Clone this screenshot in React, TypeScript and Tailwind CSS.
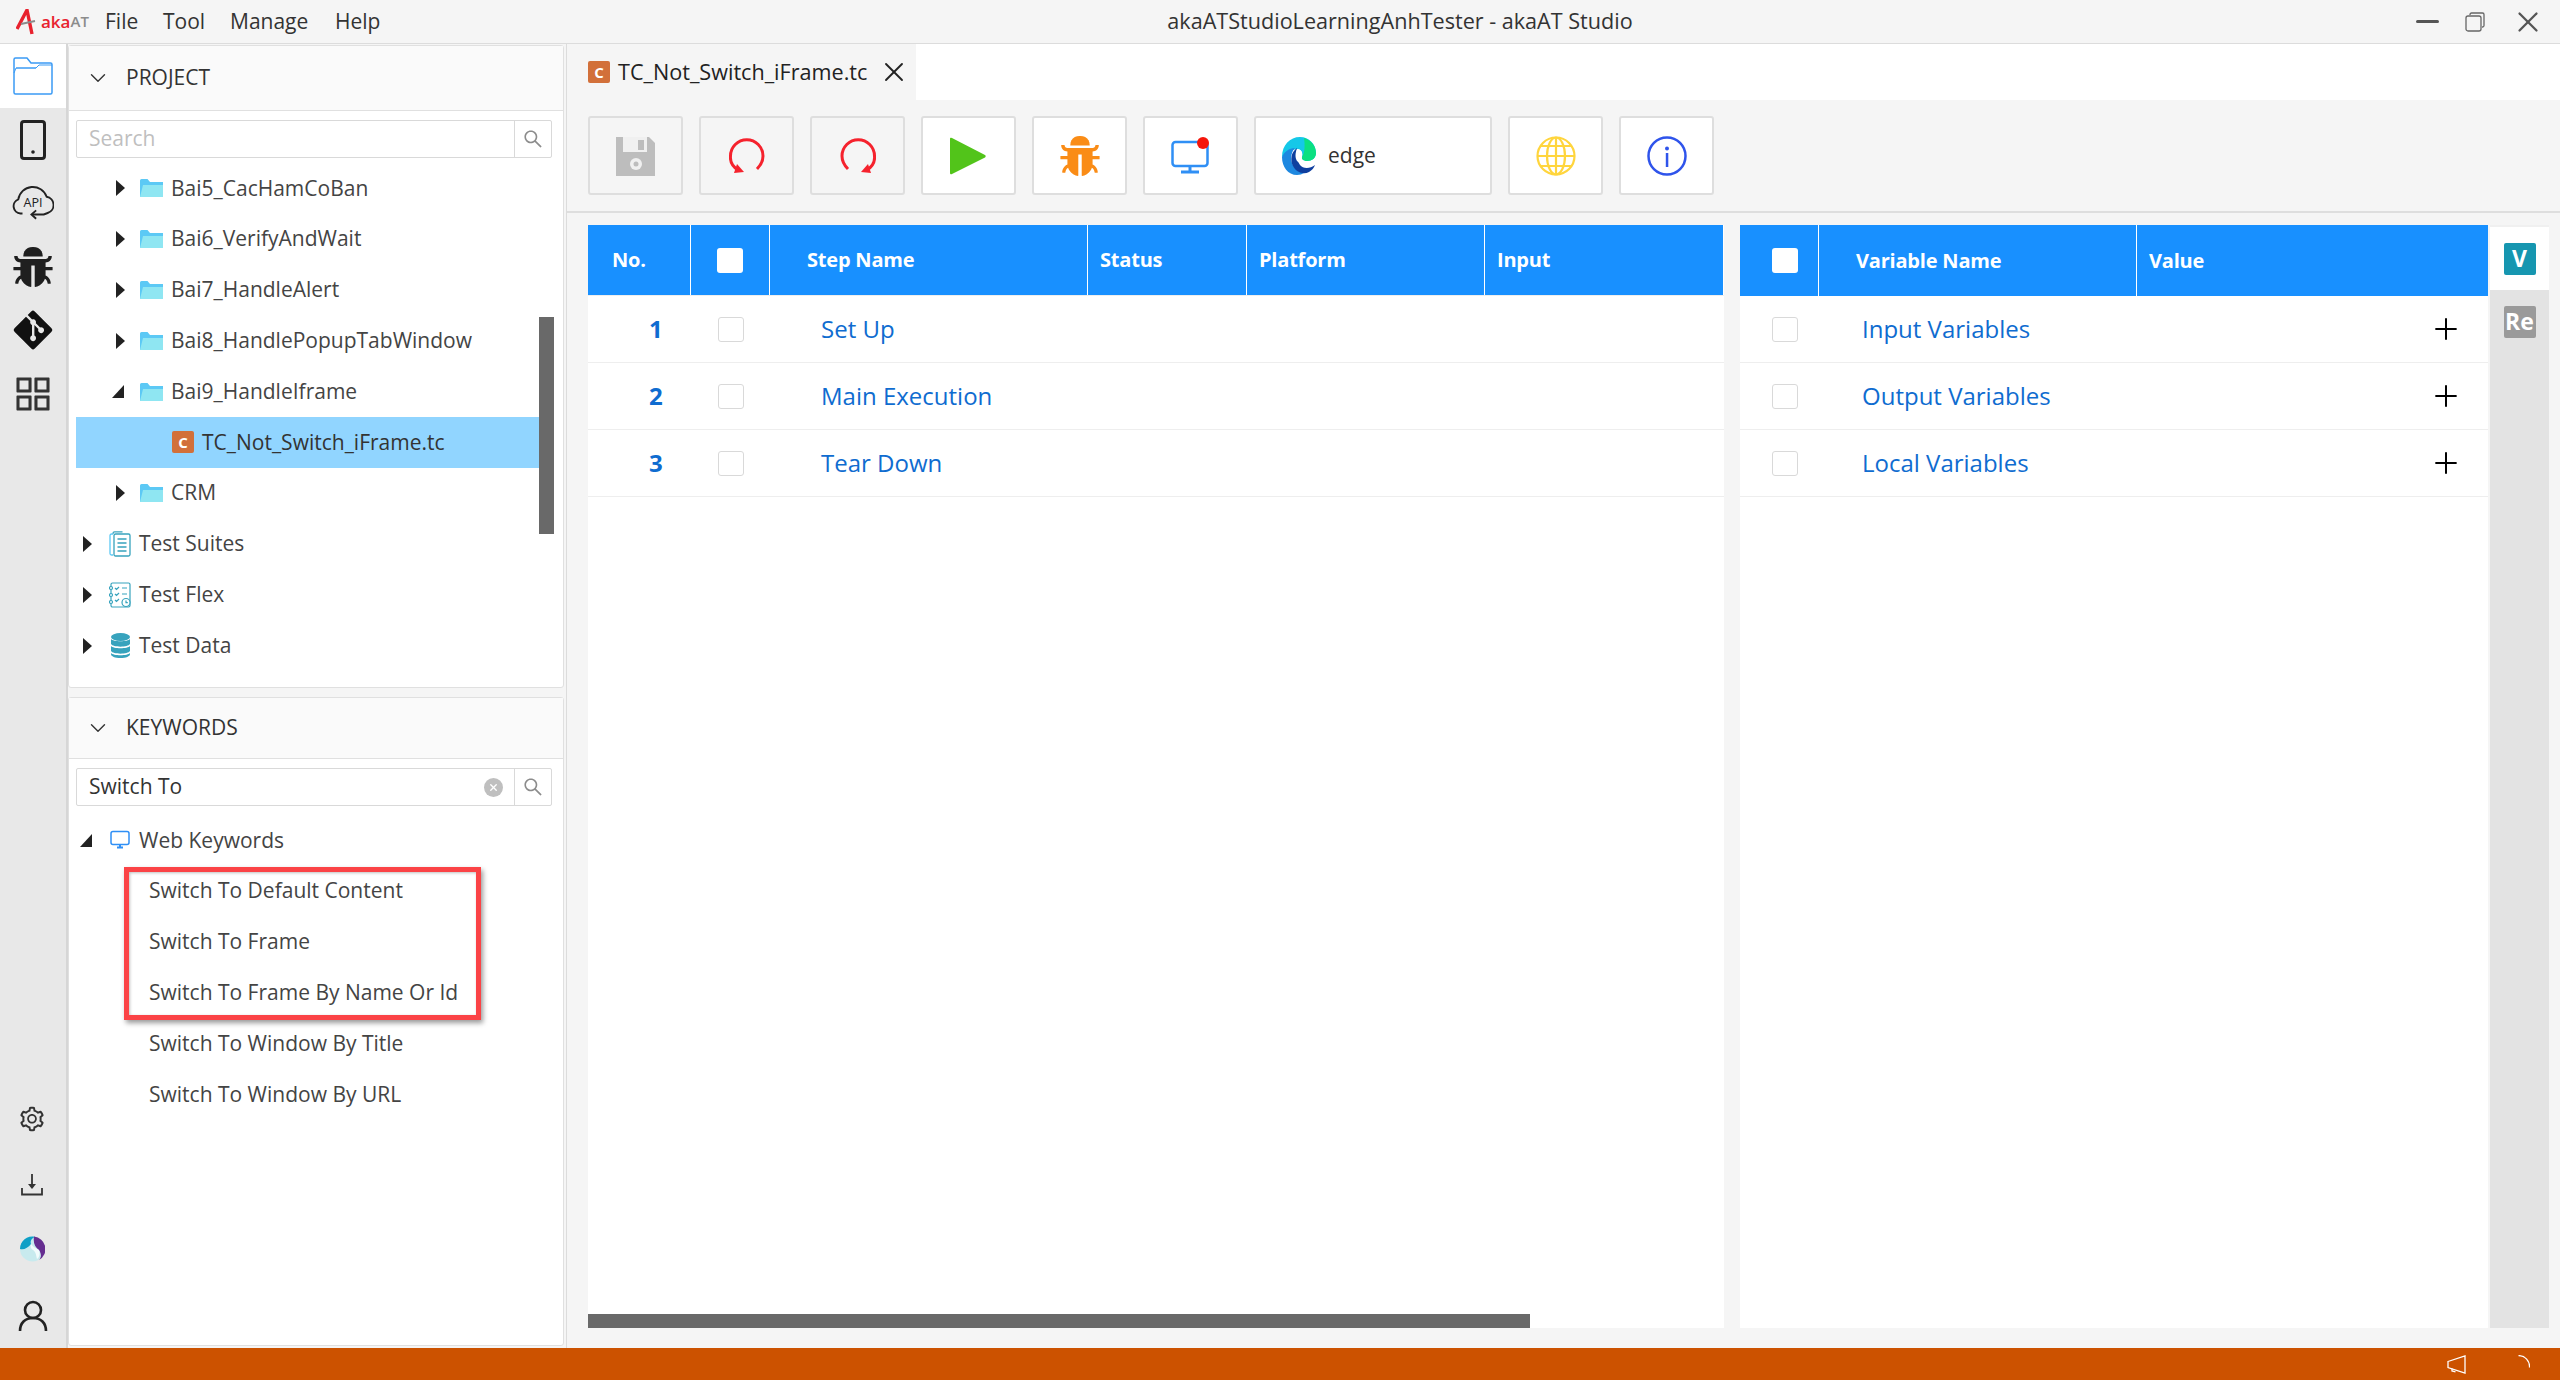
import { AiFillBug, AiOutlineAppstore, AiOutlineSearch, AiOutlineSetting } from "react-icons/ai"
import { FaGitAlt } from "react-icons/fa"
import { ChevronDown, Plus, X } from "lucide-react"

const FolderIcon = () => (
  <svg width="23" height="18" viewBox="0 0 23 18" className="shrink-0">
    <path d="M0 1.500A1.500 1.500 0 0 1 1.500 0h6L10 3h13v15H0z" fill="#5cc9f5" />
    <path d="M0 18L3 6h20v12z" fill="#8fe6f2" />
  </svg>
)

const FileBadge = () => (
  <span className="flex h-[22px] w-[22px] shrink-0 items-center justify-center rounded-[2px] bg-[#d2703a] text-[15px] font-bold text-white">C</span>
)

const Caret = ({ open }: { open?: boolean }) =>
  open ? (
    <svg width="12" height="13" viewBox="0 0 12 13" className="shrink-0"><path d="M12 0v13H0z" fill="#222" /></svg>
  ) : (
    <svg width="9" height="16" viewBox="0 0 9 16" className="shrink-0"><path d="M0 0l9 8-9 8z" fill="#222" /></svg>
  )

const SuitesIcon = () => (
  <svg width="22" height="26" viewBox="0 0 22 26" fill="none" stroke="#37a3bd" strokeWidth="1.300" className="shrink-0">
    <path d="M4 3V2.200A1.500 1.500 0 0 1 5.500.8h8" />
    <path d="M4 3H2.500A1.500 1.500 0 0 0 1 4.500v18A1.500 1.500 0 0 0 2.500 24H4" stroke="#5cc9f5" />
    <rect x="5" y="3" width="16" height="22" rx="1.500" />
    <path d="M8.500 8h9M8.500 12h9M8.500 16h9M8.500 20h9" />
  </svg>
)

const FlexIcon = () => (
  <svg width="22" height="26" viewBox="0 0 22 26" fill="none" stroke="#37a3bd" strokeWidth="1.200" className="shrink-0">
    <rect x="2" y="1" width="19" height="24" rx="1.500" />
    <circle cx="2" cy="6" r="1.500" fill="#fff" />
    <circle cx="2" cy="13" r="1.500" fill="#fff" />
    <circle cx="2" cy="20" r="1.500" fill="#fff" />
    <path d="M6 6l1.500 1.500L10 5M13 6h5M6 12l1.500 1.500L10 11M13 12h5M6 18l1.500 1.500L10 17" />
    <circle cx="17" cy="20.500" r="4" fill="#fff" />
    <path d="M17 18.500v2.200h1.800" />
  </svg>
)

const DataIcon = () => (
  <svg width="19" height="25" viewBox="0 0 19 25" fill="#37a3bd" className="shrink-0">
    <ellipse cx="9.500" cy="4" rx="9.500" ry="4" />
    <path d="M0 6c2 3 17 3 19 0v5c-2 3.500-17 3.500-19 0zM0 13c2 3 17 3 19 0v5c-2 3.500-17 3.500-19 0z" />
    <path d="M0 20c2 3 17 3 19 0v1c0 2.500-4 4-9.500 4S0 23.500 0 21z" />
  </svg>
)

const MonitorIcon = () => (
  <svg width="20" height="20" viewBox="0 0 20 20" fill="none" className="shrink-0">
    <rect x="1" y="1.500" width="18" height="13" rx="2" stroke="#2f8ff5" strokeWidth="1.500" />
    <path d="M7 17.500h6M10 15v2.500" stroke="#2f8ff5" strokeWidth="2" />
  </svg>
)

const TreeRow = ({ pad, icon, label, caretWidth, open, selected, iconBox }: {
  pad: number
  icon?: React.ReactNode
  label: string
  caretWidth?: number
  open?: boolean
  selected?: boolean
  iconBox: number
}) => (
  <div className={`flex h-[50.800px] items-center ${selected ? "bg-[#91d5ff] text-[#333]" : "text-[#444]"}`} style={{ paddingLeft: pad }}>
    {caretWidth && <span className="flex shrink-0 items-center" style={{ width: caretWidth }}><Caret open={open} /></span>}
    <span className="flex shrink-0 items-center justify-center" style={{ width: iconBox }}>{icon}</span>
    <span className="ml-[8px] whitespace-nowrap">{label}</span>
  </div>
)

const SearchBox = ({ value, clear }: { value?: string; clear?: boolean }) => (
  <div className="flex h-[38px] items-stretch rounded-[2px] border border-[#d9d9d9] bg-white">
    <div className={`flex flex-1 items-center justify-between pl-[12px] pr-[11px] ${value ? "text-[#333]" : "text-[#bfbfbf]"}`}>
      <span>{value || "Search"}</span>
      {clear && (
        <span className="flex h-[19px] w-[19px] items-center justify-center rounded-full bg-[#bfbfbf]">
          <X size={11} strokeWidth={3} className="text-white" />
        </span>
      )}
    </div>
    <div className="flex w-[37px] items-center justify-center border-l border-[#d9d9d9]">
      <AiOutlineSearch className="h-[22px] w-[22px] text-[#8c8c8c]" />
    </div>
  </div>
)

const PanelHeader = ({ title, tall }: { title: string; tall?: boolean }) => (
  <div className={`flex shrink-0 items-center border-b border-[#e0e0e0] bg-[#fafafa] pl-[16px] text-[#333] ${tall ? "h-[65px]" : "h-[61px]"}`}>
    <ChevronDown size={26} strokeWidth={1.300} className="text-[#333]" />
    <span className="ml-[15px]">{title}</span>
  </div>
)

const ToolButton = ({ children, gray, wide }: { children: React.ReactNode; gray?: boolean; wide?: boolean }) => (
  <div className={`flex h-[79px] items-center rounded-[3px] border-2 border-[#dedede] ${wide ? "w-[238px] pl-[26px]" : "w-[95px] justify-center"} ${gray ? "bg-[#f5f5f5]" : "bg-white"}`}>
    {children}
  </div>
)

const Loop = ({ flip }: { flip?: boolean }) => (
  <svg width="36" height="36" viewBox="0 0 36 36" fill="none" className={flip ? "-scale-x-100" : ""}>
    <path d="M9 32C3 28 1 23 1.500 18A16 16 0 0 1 34 18c0 5-2 9-6 13" stroke="#f5222d" strokeWidth="3" />
    <path d="M5 35l10-1-7-8z" fill="#f5222d" />
  </svg>
)

const Check = ({ header }: { header?: boolean }) => (
  <span className={`block h-[25px] w-[26px] rounded-[3px] ${header ? "bg-white" : "border border-[#d9d9d9] bg-white"}`} />
)

const steps = ["Set Up", "Main Execution", "Tear Down"]
const variables = ["Input Variables", "Output Variables", "Local Variables"]
const keywords = ["Switch To Default Content", "Switch To Frame", "Switch To Frame By Name Or Id", "Switch To Window By Title", "Switch To Window By URL"]

export default function App() {
  return (
    <div className="flex h-[1380px] w-[2560px] flex-col overflow-hidden bg-[#f5f5f5] font-['Open_Sans','Noto_Sans',sans-serif] text-[21px]">
      {/* Title bar */}
      <div className="relative flex h-[44px] shrink-0 items-center border-b border-[#dcdcdc] bg-[#f5f5f5] text-[#333]">
        <div className="flex w-[105px] items-center pl-[16px]">
          <svg width="24" height="26" viewBox="0 0 24 26" fill="none">
            <path d="M1 20L11 1l5 24" stroke="#e8222e" strokeWidth="3.400" />
            <path d="M5 15l14-3" stroke="#8c8c8c" strokeWidth="2" />
          </svg>
          <span className="ml-[1px] text-[17px] font-semibold text-[#e8222e]">aka</span>
          <span className="text-[15px] font-semibold text-[#8c8c8c]">AT</span>
        </div>
        <span className="w-[58px]">File</span>
        <span className="w-[67px]">Tool</span>
        <span className="w-[105px]">Manage</span>
        <span>Help</span>
        <span className="absolute left-[240px] right-0 text-center text-[21.600px]">akaATStudioLearningAnhTester - akaAT Studio</span>
        <div className="absolute right-[15px] top-0 flex h-[43px] items-center gap-[26px]">
          <span className="h-[3px] w-[23px] rounded-full bg-[#555]" />
          <svg width="20" height="20" viewBox="0 0 20 20" fill="none" stroke="#666" strokeWidth="1.300">
            <rect x="1" y="4" width="15" height="15" rx="2" />
            <path d="M5 3V2.500A1.500 1.500 0 0 1 6.500 1h11A1.500 1.500 0 0 1 19 2.500v11a1.500 1.500 0 0 1-1.500 1.500H17" />
          </svg>
          <X size={34} strokeWidth={1.600} className="text-[#555]" />
        </div>
      </div>

      <div className="flex min-h-0 flex-1">
        {/* Rail */}
        <div className="flex w-[68px] shrink-0 flex-col items-center border-r-2 border-[#d6d6d6] bg-[#e8e8e8] pb-[16px] text-[#222]">
          <div className="flex h-[64px] w-full items-center justify-center bg-white">
            <svg width="40" height="38" viewBox="0 0 40 38" fill="none" stroke="#3b9bf5" strokeWidth="1.500">
              <path d="M1 6V2.500A1.500 1.500 0 0 1 2.500 1H14l4 5h19.500A1.500 1.500 0 0 1 39 7.500v28a1.500 1.500 0 0 1-1.500 1.500h-35A1.500 1.500 0 0 1 1 35.500z" />
              <path d="M1 16l2-5h20l3-3h13M3 11h20" strokeWidth="1" />
            </svg>
          </div>
          <div className="flex h-[64px] w-full items-center justify-center">
            <svg width="26" height="40" viewBox="0 0 26 40" fill="none">
              <rect x="1.500" y="1.500" width="23" height="37" rx="2.500" stroke="#222" strokeWidth="3" />
              <circle cx="13" cy="32" r="1.800" fill="#222" />
            </svg>
          </div>
          <div className="flex h-[62px] w-full items-center justify-center">
            <svg width="42" height="38" viewBox="0 0 40 36" fill="none" stroke="#222" strokeWidth="1.800">
              <path d="M10 28H8A7 7 0 0 1 6 14.500 14 14 0 0 1 33 12a8 8 0 0 1 1 15.500c-1.500.5-3 1-4 1.500H19" />
              <path d="M23 25l-4.500 4 4.500 4" />
              <text x="20" y="22" textAnchor="middle" fontSize="12" fill="#222" stroke="none">API</text>
            </svg>
          </div>
          <div className="flex h-[66px] w-full items-center justify-center">
            <AiFillBug className="h-[46px] w-[46px] text-[#1f1f1f]" />
          </div>
          <div className="flex h-[60px] w-full items-center justify-center">
            <FaGitAlt className="h-[44px] w-[42px] text-[#111]" />
          </div>
          <div className="flex h-[68px] w-full items-center justify-center">
            <AiOutlineAppstore className="h-[46px] w-[46px] text-[#333]" />
          </div>
          <div className="mt-auto flex h-[58px] w-full items-center justify-center pr-[2px]">
            <AiOutlineSetting className="h-[28px] w-[28px] text-[#333]" />
          </div>
          <div className="flex h-[74px] w-full items-center justify-center pr-[2px]">
            <svg width="22" height="22" viewBox="0 0 22 22" fill="none" stroke="#333">
              <path d="M1 14v6.500h20V14" strokeWidth="1.800" />
              <path d="M11 0v13" strokeWidth="1.800" />
              <path d="M7 10h8l-4 5z" fill="#333" stroke="none" />
            </svg>
          </div>
          <div className="flex h-[54px] w-full items-center justify-center pr-[2px]">
            <svg width="25" height="26" viewBox="0 0 25 26">
              <circle cx="12.500" cy="13" r="12.500" fill="#c8eaee" />
              <path d="M0 13A12.500 12.500 0 0 1 15 .7C11 3 10 5 11 8c-3 4-7 6-11 5z" fill="#0f9fc6" />
              <path d="M14 .6A12.500 12.500 0 0 1 19 24c3-3 2-7 0-10-4-3-6-7-5-13.400z" fill="#652d90" />
              <path d="M11 8c2 3 5 4 8 6 1 3 1 7-2 9-1-4-1-7-4-9-2-1-3-3-2-6z" fill="#f2fbfc" />
            </svg>
          </div>
          <div className="flex h-[56px] w-full items-end justify-center">
            <svg width="30" height="32" viewBox="0 0 30 32" fill="none" stroke="#222" strokeWidth="2.600">
              <circle cx="15" cy="10" r="8" />
              <path d="M2 31c0-8 5-13 13-13s13 5 13 13" />
            </svg>
          </div>
        </div>

        {/* Side panels */}
        <div className="flex w-[499px] shrink-0 flex-col border-r border-[#dcdcdc] pr-[2px] pt-[1px]">
          <div className="flex h-[643px] flex-col rounded-[3px] border border-[#e0e0e0] bg-white">
            <PanelHeader title="PROJECT" tall />
            <div className="relative flex-1 pl-[7px] pr-[11px] pt-[9px]">
              <SearchBox />
              <div className="pt-[5px]">
                <TreeRow pad={40} caretWidth={24} iconBox={23} icon={<FolderIcon />} label="Bai5_CacHamCoBan" />
                <TreeRow pad={40} caretWidth={24} iconBox={23} icon={<FolderIcon />} label="Bai6_VerifyAndWait" />
                <TreeRow pad={40} caretWidth={24} iconBox={23} icon={<FolderIcon />} label="Bai7_HandleAlert" />
                <TreeRow pad={40} caretWidth={24} iconBox={23} icon={<FolderIcon />} label="Bai8_HandlePopupTabWindow" />
                <TreeRow pad={36} caretWidth={28} iconBox={23} open icon={<FolderIcon />} label="Bai9_HandleIframe" />
                <div className="mr-[13px]">
                  <TreeRow pad={96} iconBox={22} icon={<FileBadge />} label="TC_Not_Switch_iFrame.tc" selected />
                </div>
                <TreeRow pad={40} caretWidth={24} iconBox={23} icon={<FolderIcon />} label="CRM" />
                <TreeRow pad={7} caretWidth={26} iconBox={22} icon={<SuitesIcon />} label="Test Suites" />
                <TreeRow pad={7} caretWidth={26} iconBox={22} icon={<FlexIcon />} label="Test Flex" />
                <TreeRow pad={7} caretWidth={26} iconBox={22} icon={<DataIcon />} label="Test Data" />
              </div>
              <div className="absolute right-[9px] top-[206px] h-[217px] w-[15px] bg-[#696969]" />
            </div>
          </div>
          <div className="mb-[2px] mt-[9px] flex flex-1 flex-col rounded-[3px] border border-[#e0e0e0] bg-white">
            <PanelHeader title="KEYWORDS" />
            <div className="flex-1 pl-[7px] pr-[11px] pt-[9px]">
              <SearchBox value="Switch To" clear />
              <div className="pt-[9px]">
                <TreeRow pad={4} caretWidth={29} iconBox={22} open icon={<MonitorIcon />} label="Web Keywords" />
                <div className="relative">
                  {keywords.map(k => (
                    <div key={k} className="flex h-[50.800px] items-center pl-[73px] text-[#444]">{k}</div>
                  ))}
                  <div className="absolute left-[48px] top-[1px] h-[153px] w-[357px] border-[5px] border-[#fb4346] shadow-[2px_3px_5px_rgba(0,0,0,0.4),inset_1px_1px_3px_rgba(0,0,0,0.25)]" />
                </div>
              </div>
            </div>
          </div>
        </div>

        {/* Main */}
        <div className="flex min-w-0 flex-1 flex-col">
          <div className="flex h-[56px] shrink-0 bg-white">
            <div className="flex w-[349px] items-center bg-[#f5f5f5] pl-[21px] text-[21.600px] text-[#222]">
              <FileBadge />
              <span className="ml-[8px]">TC_Not_Switch_iFrame.tc</span>
              <X size={32} strokeWidth={1.400} className="ml-[11px] text-[#222]" />
            </div>
          </div>
          <div className="flex h-[113px] shrink-0 items-start gap-[16px] border-b-2 border-[#dedede] pl-[21px] pt-[16px]">
            <ToolButton gray>
              <svg width="39" height="40" viewBox="0 0 39 40">
                <path d="M0 1h33l6 6v33H0z" fill="#bdbdbd" />
                <rect x="7" y="1" width="24" height="15" fill="#f0f0f0" />
                <rect x="22" y="4" width="6" height="10" fill="#bdbdbd" />
                <circle cx="20" cy="28" r="6" fill="#f0f0f0" />
                <circle cx="20" cy="28" r="2.500" fill="#bdbdbd" />
              </svg>
            </ToolButton>
            <ToolButton gray><Loop /></ToolButton>
            <ToolButton gray><Loop flip /></ToolButton>
            <ToolButton>
              <svg width="37" height="40" viewBox="0 0 37 40">
                <path d="M2 2l33 17a1.500 1.500 0 0 1 0 2.500L2 38a1.200 1.200 0 0 1-2-1V3a1.200 1.200 0 0 1 2-1z" fill="#52c41a" />
              </svg>
            </ToolButton>
            <ToolButton><AiFillBug className="h-[46px] w-[46px] text-[#fa8c16]" /></ToolButton>
            <ToolButton>
              <svg width="40" height="38" viewBox="0 0 40 38" fill="none">
                <rect x="1.500" y="5" width="35" height="24" rx="3" stroke="#2f8ff5" strokeWidth="2.500" />
                <path d="M10 35h18M19 29v6" stroke="#2f8ff5" strokeWidth="3" />
                <circle cx="32" cy="6" r="6" fill="#f5150b" />
              </svg>
            </ToolButton>
            <ToolButton wide>
              <svg width="34" height="38" viewBox="0 0 34 38">
                <path d="M0 20C0 8 8 0 18 0c9 0 16 7 16 16 0 5-4 8-9 8-3 0-6-1-5-4 1-4-1-8-5-8-4 0-9 4-15 8z" fill="#15c8e8" />
                <path d="M22 1c7 2 12 8 12 15 0 5-4 8-9 8-3 0-6-1-5-4 3-4 3-13 2-19z" fill="#0be081" />
                <path d="M0 20c2-5 7-9 13-9-3 3-5 9-3 15 2 5 7 9 12 10-2 1-4 2-7 2C6 38 0 30 0 20z" fill="#1e88e0" />
                <path d="M15 11c-6 4-7 12-4 18 3 6 10 9 16 6 3-2 5-4 6-7-5 4-12 4-15 0-3-4-4-11-3-17z" fill="#0f3f9f" />
                <path d="M15 12c4 0 6 3 5 7-1 3 1 5 5 5h2c-4 3-9 3-12 0-2-3-2-8 0-12z" fill="#fff" />
              </svg>
              <span className="ml-[12px] text-[#333]">edge</span>
            </ToolButton>
            <ToolButton>
              <svg width="40" height="40" viewBox="0 0 40 40" fill="none" stroke="#ffd53d" strokeWidth="2.200">
                <circle cx="20" cy="20" r="18.500" />
                <ellipse cx="20" cy="20" rx="9" ry="18.500" />
                <path d="M20 1.500v37M1.500 20h37M4.500 10h31M4.500 30h31" />
              </svg>
            </ToolButton>
            <ToolButton>
              <svg width="40" height="40" viewBox="0 0 40 40" fill="none">
                <circle cx="20" cy="20" r="18.500" stroke="#2f54eb" strokeWidth="2.500" />
                <circle cx="20" cy="12.500" r="2" fill="#2f54eb" />
                <rect x="18.800" y="17" width="2.500" height="14" fill="#2f54eb" />
              </svg>
            </ToolButton>
          </div>

          <div className="flex min-h-0 flex-1 pb-[20px] pl-[21px] pt-[12px]">
            {/* Steps table */}
            <div className="flex w-[1136px] shrink-0 flex-col bg-white">
              <div className="flex h-[71px] shrink-0 items-stretch border-b border-[#eeeeee] bg-[#1890ff] text-[20px] font-bold tracking-[-0.2px] text-white">
                <div className="flex w-[103px] items-center border-r border-white pl-[24px]">No.</div>
                <div className="flex w-[79px] items-center justify-center border-r border-white"><Check header /></div>
                <div className="flex w-[318px] items-center border-r border-white pl-[37px]">Step Name</div>
                <div className="flex w-[159px] items-center border-r border-white pl-[12px]">Status</div>
                <div className="flex w-[238px] items-center border-r border-white pl-[12px]">Platform</div>
                <div className="flex w-[239px] items-center border-r border-white pl-[12px]">Input</div>
              </div>
              {steps.map((s, i) => (
                <div key={s} className="flex h-[67px] items-center border-b border-[#eeeeee] text-[24px]">
                  <div className="w-[103px] pl-[61px] font-bold text-[#0f6cd0]">{i + 1}</div>
                  <div className="flex w-[79px] justify-center"><Check /></div>
                  <div className="pl-[51px] text-[#0f6cd0]">{s}</div>
                </div>
              ))}
              <div className="mt-auto h-[14px] w-[942px] bg-[#696969]" />
            </div>

            {/* Variables table */}
            <div className="ml-[16px] flex w-[748px] shrink-0 flex-col bg-white">
              <div className="flex h-[71px] shrink-0 items-stretch bg-[#1890ff] text-[20px] font-bold tracking-[-0.2px] text-white">
                <div className="flex w-[79px] items-center border-r border-white pl-[32px]"><Check header /></div>
                <div className="flex w-[318px] items-center border-r border-white pl-[37px]">Variable Name</div>
                <div className="flex items-center pl-[12px]">Value</div>
              </div>
              {variables.map(v => (
                <div key={v} className="flex h-[67px] items-center border-b border-[#eeeeee] pr-[25px] text-[24px]">
                  <div className="flex w-[79px] pl-[32px]"><Check /></div>
                  <div className="flex-1 pl-[43px] text-[#0f6cd0]">{v}</div>
                  <Plus size={34} strokeWidth={1.400} className="text-black" />
                </div>
              ))}
            </div>

            {/* Side tabs */}
            <div className="ml-[2px] flex w-[59px] shrink-0 flex-col border-t-2 border-[#f0f0f0] bg-[#e3e3e3]">
              <div className="flex h-[63px] items-center justify-center bg-white">
                <span className="flex h-[32px] w-[32px] items-center justify-center rounded-[2px] bg-[#1696b0] text-[23px] font-bold text-white">V</span>
              </div>
              <div className="flex h-[63px] items-center justify-center">
                <span className="flex h-[32px] w-[32px] items-center justify-center rounded-[2px] bg-[#9a9a9a] text-[23px] font-bold text-white">Re</span>
              </div>
            </div>
          </div>
        </div>
      </div>

      {/* Status bar */}
      <div className="flex h-[32px] shrink-0 items-center justify-end bg-[#cc5200] pr-[30px]">
        <svg width="19" height="19" viewBox="0 0 19 19" fill="none" stroke="#fff" strokeWidth="1.300">
          <path d="M1 6.500L18 1v17L1 12.500z" />
          <path d="M5 13.500v2.500l3.500.8" />
        </svg>
        <svg width="12" height="13" viewBox="0 0 12 13" fill="none" stroke="#fff" strokeWidth="1.300" className="mb-[6px] ml-[52px]">
          <path d="M.5.600A11 11 0 0 1 11.500 12.500" />
        </svg>
      </div>
    </div>
  )
}
